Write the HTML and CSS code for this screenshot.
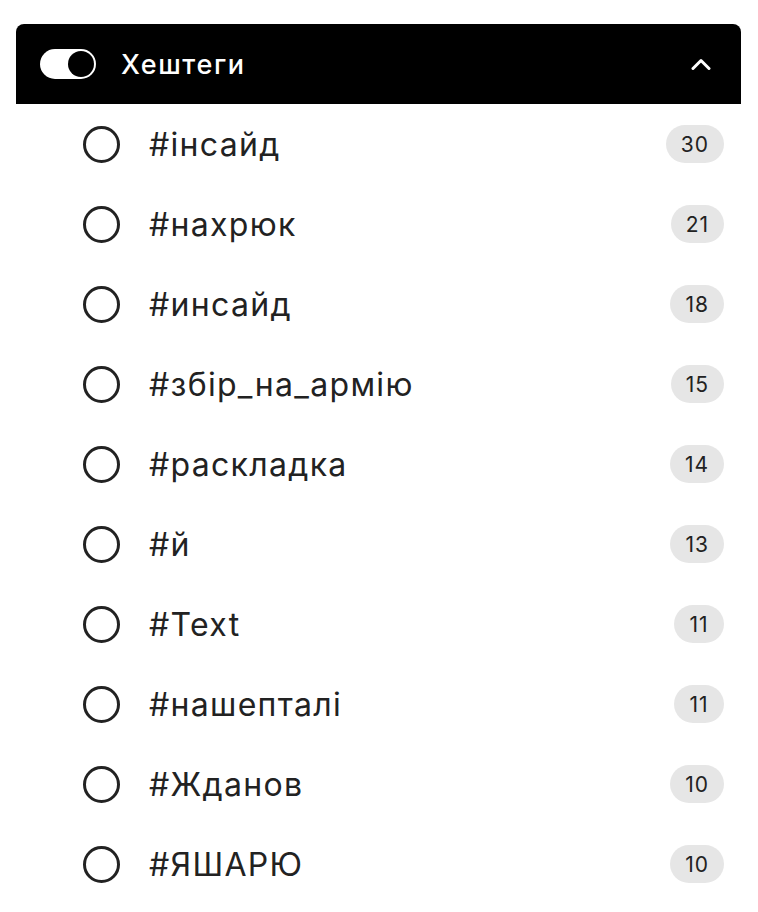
FILE: index.html
```html
<!DOCTYPE html>
<html lang="uk">
<head>
    <meta charset="UTF-8">
    <meta name="viewport" content="width=device-width, initial-scale=1.0">
    <title>Хештеги</title>
    <link rel="stylesheet" href="styles.css">
</head>
<body>
    <div class="filter-panel">
        <!-- Header -->
        <div class="filter-header">
            <span class="toggle on"><span class="toggle-knob"></span></span>
            <h3 class="filter-title">Хештеги</h3>
            <svg class="chevron" width="20" height="12" viewBox="0 0 20 12">
                <path d="M2 10.5 L10 2.5 L18 10.5" fill="none" stroke="#fff" stroke-width="3" stroke-linecap="round" stroke-linejoin="round"/>
            </svg>
        </div>

        <!-- Hashtag list -->
        <ul class="tag-list">
            <li class="tag-row"><span class="radio"></span><span class="tag-name">#інсайд</span><span class="tag-count">30</span></li>
            <li class="tag-row"><span class="radio"></span><span class="tag-name">#нахрюк</span><span class="tag-count">21</span></li>
            <li class="tag-row"><span class="radio"></span><span class="tag-name">#инсайд</span><span class="tag-count">18</span></li>
            <li class="tag-row"><span class="radio"></span><span class="tag-name">#збір_на_армію</span><span class="tag-count">15</span></li>
            <li class="tag-row"><span class="radio"></span><span class="tag-name">#раскладка</span><span class="tag-count">14</span></li>
            <li class="tag-row"><span class="radio"></span><span class="tag-name">#й</span><span class="tag-count">13</span></li>
            <li class="tag-row"><span class="radio"></span><span class="tag-name">#Text</span><span class="tag-count">11</span></li>
            <li class="tag-row"><span class="radio"></span><span class="tag-name">#нашепталі</span><span class="tag-count">11</span></li>
            <li class="tag-row"><span class="radio"></span><span class="tag-name">#Жданов</span><span class="tag-count">10</span></li>
            <li class="tag-row"><span class="radio"></span><span class="tag-name">#ЯШАРЮ</span><span class="tag-count">10</span></li>
        </ul>
    </div>
</body>
</html>
```

FILE: styles.css
```css
body {
    margin: 0;
    background: #fff;
    font-family: Inter, "Noto Sans", sans-serif;
    color: #222;
}

.filter-panel {
    margin: 24px 17px 0 16px;
}

.filter-header {
    height: 80px;
    background: #000;
    border-radius: 8px 8px 0 0;
    display: flex;
    align-items: center;
    padding: 0 30px 0 24px;
    color: #fff;
}

.toggle {
    width: 56px;
    height: 30px;
    border-radius: 15px;
    background: #fff;
    display: flex;
    align-items: center;
    padding: 2px;
    box-sizing: border-box;
    flex-shrink: 0;
}

.toggle.on {
    justify-content: flex-end;
}

.toggle-knob {
    width: 26px;
    height: 26px;
    border-radius: 50%;
    background: #000;
}

.filter-title {
    flex: 1;
    margin: 0 0 0 25px;
    font-size: 27px;
    font-weight: 500;
    letter-spacing: 1.6px;
}

.chevron {
    display: block;
}

.tag-list {
    list-style: none;
    margin: 0;
    padding: 0;
}

.tag-row {
    height: 80px;
    display: flex;
    align-items: center;
    padding: 0 17px 0 67px;
}

.radio {
    width: 37px;
    height: 37px;
    border: 3px solid #222;
    border-radius: 50%;
    box-sizing: border-box;
    flex-shrink: 0;
}

.tag-name {
    flex: 1;
    margin-left: 29px;
    font-size: 32px;
    font-weight: 400;
    letter-spacing: 1.3px;
}

.tag-count {
    height: 38px;
    min-width: 50px;
    padding: 0 15px;
    box-sizing: border-box;
    border-radius: 19px;
    background: #e6e6e6;
    display: flex;
    align-items: center;
    justify-content: center;
    font-size: 21px;
    font-weight: 400;
    letter-spacing: 1px;
}
```
